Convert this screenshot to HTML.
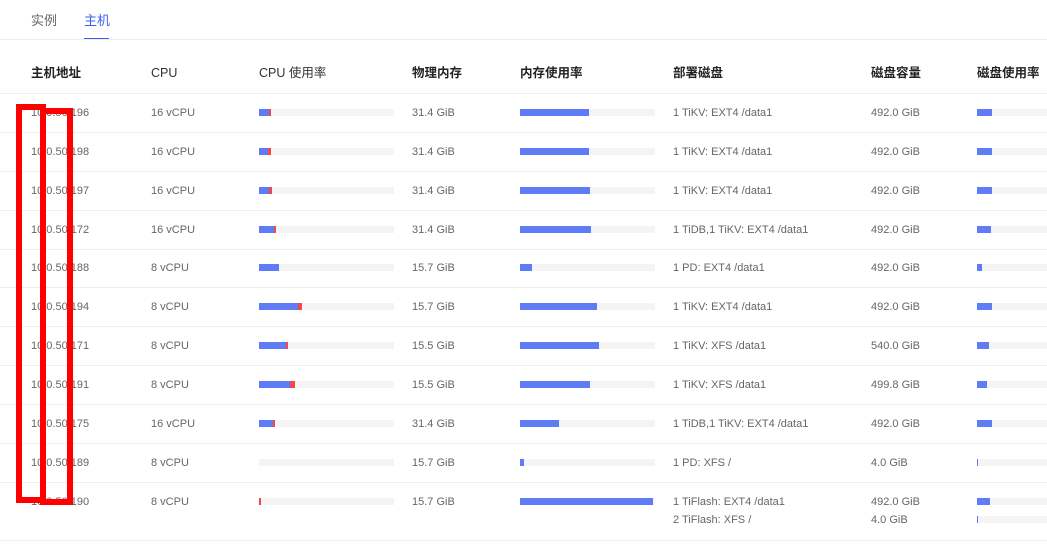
<!DOCTYPE html>
<html><head><meta charset="utf-8"><style>
*{margin:0;padding:0;box-sizing:border-box}
body{width:1047px;height:551px;background:#fff;position:relative;overflow:hidden;font-family:"Liberation Sans","Noto Sans CJK SC",sans-serif;color:#666;font-size:11px}
.a{position:absolute;white-space:nowrap;line-height:16px}
.h{position:absolute;top:65px;font-size:12.5px;color:#222;font-weight:bold;line-height:16px}
.ln{position:absolute;left:0;width:1047px;height:1px;background:#eee}
.tr{position:absolute;height:7px;background:#f4f4f4;width:135px}
.tr i{position:absolute;left:0;top:0;height:7px;background:#5f7cf6}
.tr b{position:absolute;top:0;height:7px;background:#f5474a}
.rb{position:absolute;border:6px solid #f00}
</style></head><body>
<div class="a" style="left:31px;top:13px;font-size:13px;color:#666">实例</div>
<div class="a" style="left:84px;top:13px;font-size:13px;color:#3b5ef0">主机</div>
<div style="position:absolute;left:84px;top:38px;width:25px;height:2px;background:#3b5ef0"></div>
<div class="ln" style="top:39px"></div>
<div class="h" style="left:31px">主机地址</div>
<div class="h" style="left:151px;font-weight:normal;color:#333">CPU</div>
<div class="h" style="left:259px;font-weight:normal;color:#333">CPU 使用率</div>
<div class="h" style="left:412px">物理内存</div>
<div class="h" style="left:520px">内存使用率</div>
<div class="h" style="left:673px">部署磁盘</div>
<div class="h" style="left:871px">磁盘容量</div>
<div class="h" style="left:977px">磁盘使用率</div>
<div class="ln" style="top:93px"></div>
<div class="ln" style="top:132px"></div>
<div class="ln" style="top:171px"></div>
<div class="ln" style="top:210px"></div>
<div class="ln" style="top:249px"></div>
<div class="ln" style="top:287px"></div>
<div class="ln" style="top:326px"></div>
<div class="ln" style="top:365px"></div>
<div class="ln" style="top:404px"></div>
<div class="ln" style="top:443px"></div>
<div class="ln" style="top:482px"></div>
<div class="ln" style="top:540px"></div>

<div class="a" style="left:31px;top:105px">10.0.50.196</div><div class="a" style="left:151px;top:105px">16 vCPU</div>
<div class="tr" style="left:259px;top:109px"><i style="width:10px"></i><b style="left:10px;width:2px"></b></div>
<div class="a" style="left:412px;top:105px">31.4 GiB</div>
<div class="tr" style="left:520px;top:109px"><i style="width:69px"></i></div>
<div class="a" style="left:673px;top:105px">1 TiKV: EXT4 /data1</div><div class="a" style="left:871px;top:105px">492.0 GiB</div>
<div class="tr" style="left:977px;top:109px;width:80px"><i style="width:15px"></i></div>

<div class="a" style="left:31px;top:144px">10.0.50.198</div><div class="a" style="left:151px;top:144px">16 vCPU</div>
<div class="tr" style="left:259px;top:148px"><i style="width:9px"></i><b style="left:9px;width:3px"></b></div>
<div class="a" style="left:412px;top:144px">31.4 GiB</div>
<div class="tr" style="left:520px;top:148px"><i style="width:69px"></i></div>
<div class="a" style="left:673px;top:144px">1 TiKV: EXT4 /data1</div><div class="a" style="left:871px;top:144px">492.0 GiB</div>
<div class="tr" style="left:977px;top:148px;width:80px"><i style="width:15px"></i></div>

<div class="a" style="left:31px;top:183px">10.0.50.197</div><div class="a" style="left:151px;top:183px">16 vCPU</div>
<div class="tr" style="left:259px;top:187px"><i style="width:10px"></i><b style="left:10px;width:3px"></b></div>
<div class="a" style="left:412px;top:183px">31.4 GiB</div>
<div class="tr" style="left:520px;top:187px"><i style="width:70px"></i></div>
<div class="a" style="left:673px;top:183px">1 TiKV: EXT4 /data1</div><div class="a" style="left:871px;top:183px">492.0 GiB</div>
<div class="tr" style="left:977px;top:187px;width:80px"><i style="width:15px"></i></div>

<div class="a" style="left:31px;top:222px">10.0.50.172</div><div class="a" style="left:151px;top:222px">16 vCPU</div>
<div class="tr" style="left:259px;top:226px"><i style="width:15px"></i><b style="left:15px;width:2px"></b></div>
<div class="a" style="left:412px;top:222px">31.4 GiB</div>
<div class="tr" style="left:520px;top:226px"><i style="width:71px"></i></div>
<div class="a" style="left:673px;top:222px">1 TiDB,1 TiKV: EXT4 /data1</div><div class="a" style="left:871px;top:222px">492.0 GiB</div>
<div class="tr" style="left:977px;top:226px;width:80px"><i style="width:14px"></i></div>

<div class="a" style="left:31px;top:260px">10.0.50.188</div><div class="a" style="left:151px;top:260px">8 vCPU</div>
<div class="tr" style="left:259px;top:264px"><i style="width:20px"></i></div>
<div class="a" style="left:412px;top:260px">15.7 GiB</div>
<div class="tr" style="left:520px;top:264px"><i style="width:12px"></i></div>
<div class="a" style="left:673px;top:260px">1 PD: EXT4 /data1</div><div class="a" style="left:871px;top:260px">492.0 GiB</div>
<div class="tr" style="left:977px;top:264px;width:80px"><i style="width:5px"></i></div>

<div class="a" style="left:31px;top:299px">10.0.50.194</div><div class="a" style="left:151px;top:299px">8 vCPU</div>
<div class="tr" style="left:259px;top:303px"><i style="width:39px"></i><b style="left:39px;width:4px"></b></div>
<div class="a" style="left:412px;top:299px">15.7 GiB</div>
<div class="tr" style="left:520px;top:303px"><i style="width:77px"></i></div>
<div class="a" style="left:673px;top:299px">1 TiKV: EXT4 /data1</div><div class="a" style="left:871px;top:299px">492.0 GiB</div>
<div class="tr" style="left:977px;top:303px;width:80px"><i style="width:15px"></i></div>

<div class="a" style="left:31px;top:338px">10.0.50.171</div><div class="a" style="left:151px;top:338px">8 vCPU</div>
<div class="tr" style="left:259px;top:342px"><i style="width:27px"></i><b style="left:27px;width:2px"></b></div>
<div class="a" style="left:412px;top:338px">15.5 GiB</div>
<div class="tr" style="left:520px;top:342px"><i style="width:79px"></i></div>
<div class="a" style="left:673px;top:338px">1 TiKV: XFS /data1</div><div class="a" style="left:871px;top:338px">540.0 GiB</div>
<div class="tr" style="left:977px;top:342px;width:80px"><i style="width:12px"></i></div>

<div class="a" style="left:31px;top:377px">10.0.50.191</div><div class="a" style="left:151px;top:377px">8 vCPU</div>
<div class="tr" style="left:259px;top:381px"><i style="width:31px"></i><b style="left:31px;width:5px"></b></div>
<div class="a" style="left:412px;top:377px">15.5 GiB</div>
<div class="tr" style="left:520px;top:381px"><i style="width:70px"></i></div>
<div class="a" style="left:673px;top:377px">1 TiKV: XFS /data1</div><div class="a" style="left:871px;top:377px">499.8 GiB</div>
<div class="tr" style="left:977px;top:381px;width:80px"><i style="width:10px"></i></div>

<div class="a" style="left:31px;top:416px">10.0.50.175</div><div class="a" style="left:151px;top:416px">16 vCPU</div>
<div class="tr" style="left:259px;top:420px"><i style="width:14px"></i><b style="left:14px;width:2px"></b></div>
<div class="a" style="left:412px;top:416px">31.4 GiB</div>
<div class="tr" style="left:520px;top:420px"><i style="width:39px"></i></div>
<div class="a" style="left:673px;top:416px">1 TiDB,1 TiKV: EXT4 /data1</div><div class="a" style="left:871px;top:416px">492.0 GiB</div>
<div class="tr" style="left:977px;top:420px;width:80px"><i style="width:15px"></i></div>

<div class="a" style="left:31px;top:455px">10.0.50.189</div><div class="a" style="left:151px;top:455px">8 vCPU</div>
<div class="tr" style="left:259px;top:459px"></div>
<div class="a" style="left:412px;top:455px">15.7 GiB</div>
<div class="tr" style="left:520px;top:459px"><i style="width:4px"></i></div>
<div class="a" style="left:673px;top:455px">1 PD: XFS /</div><div class="a" style="left:871px;top:455px">4.0 GiB</div>
<div class="tr" style="left:977px;top:459px;width:80px"><i style="width:1px"></i></div>

<div class="a" style="left:31px;top:494px">10.0.50.190</div><div class="a" style="left:151px;top:494px">8 vCPU</div>
<div class="tr" style="left:259px;top:498px"><b style="left:0;width:2px"></b></div>
<div class="a" style="left:412px;top:494px">15.7 GiB</div>
<div class="tr" style="left:520px;top:498px"><i style="width:133px"></i></div>
<div class="a" style="left:673px;top:494px">1 TiFlash: EXT4 /data1</div><div class="a" style="left:871px;top:494px">492.0 GiB</div>
<div class="a" style="left:673px;top:512px">2 TiFlash: XFS /</div><div class="a" style="left:871px;top:512px">4.0 GiB</div>
<div class="tr" style="left:977px;top:498px;width:80px"><i style="width:13px"></i></div>
<div class="tr" style="left:977px;top:516px;width:80px"><i style="width:1px"></i></div>

<div class="rb" style="left:16px;top:104px;width:30px;height:399px"></div>
<div class="rb" style="left:40px;top:108px;width:33px;height:397px"></div>
</body></html>
